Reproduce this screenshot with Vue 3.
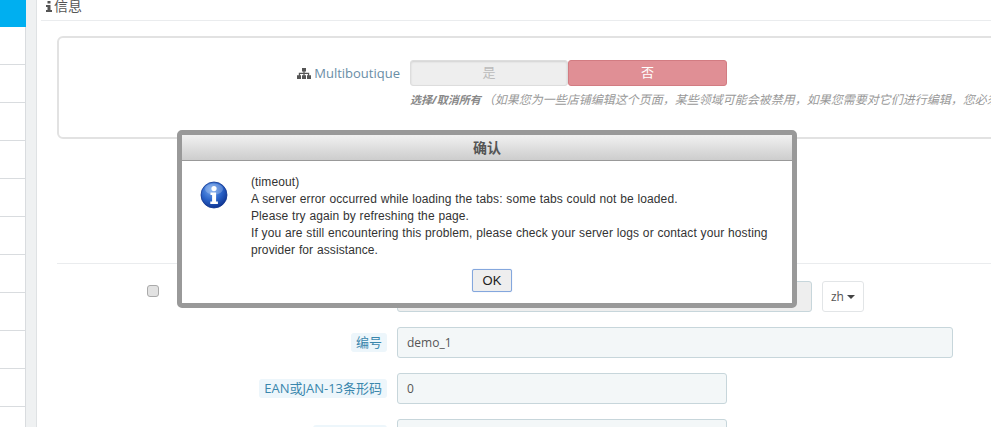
<script setup>
const sideRows = [38, 38, 38, 38, 38, 38, 38, 38, 38, 38]
const messages = [
  '(timeout)',
  'A server error occurred while loading the tabs: some tabs could not be loaded.',
  'Please try again by refreshing the page.',
  'If you are still encountering this problem, please check your server logs or contact your hosting provider for assistance.'
]
</script>

<template>
  <div class="page">
    <aside class="sidebar">
      <div class="active"></div>
      <div class="side-row first"></div>
      <div v-for="(h, i) in sideRows" :key="i" class="side-row"></div>
    </aside>
    <div class="gutter"></div>
    <main class="content">
      <h3 class="heading">
        <svg class="info-small" viewBox="0 0 6 11" width="6" height="11"><path d="M1.5 0h3v2.5h-3zM0 4h4.5v5H6v2H0V9h1.5V6H0z" fill="#555"/></svg>
        <span>信息</span>
      </h3>
      <section class="card">
        <div class="shop-row">
          <label class="shop-label">
            <svg viewBox="0 0 14 11" width="14" height="11"><path d="M5 0h4v3.4H7.6v1.4h4.6v2.4H14V11H10V7.2h.9V6H7.6v1.2H9V11H5V7.2h1.4V6H3.1v1.2H4V11H0V7.2h1.8V4.8h4.6V3.4H5z" fill="#555"/></svg>
            Multiboutique
          </label>
          <div class="toggle">
            <span class="yes">是</span>
            <span class="no">否</span>
          </div>
        </div>
        <p class="hint"><b>选择/取消所有</b>（如果您为一些店铺编辑这个页面，某些领域可能会被禁用，如果您需要对它们进行编辑，您必须选择所有）</p>
      </section>
      <hr class="rule" />
      <div class="fields">
        <div class="field name-row">
          <div class="label-col"><span class="check"></span></div>
          <div class="input grey"></div>
          <button class="lang">zh <i class="caret"></i></button>
        </div>
        <div class="field">
          <div class="label-col"><span class="tag">编号</span></div>
          <div class="input wide">demo_1</div>
        </div>
        <div class="field">
          <div class="label-col"><span class="tag">EAN或JAN-13条形码</span></div>
          <div class="input short">0</div>
        </div>
        <div class="field">
          <div class="label-col"><span class="tag">UPC条形码</span></div>
          <div class="input short"></div>
        </div>
      </div>
    </main>

    <div class="dialog">
      <div class="dialog-title">确认</div>
      <div class="dialog-body">
        <svg class="dialog-icon" viewBox="0 0 28 28" width="28" height="28">
          <defs>
            <radialGradient id="ball" cx="40%" cy="30%" r="75%">
              <stop offset="0" stop-color="#6fa4ee"/>
              <stop offset="0.55" stop-color="#2a63c8"/>
              <stop offset="1" stop-color="#0c2f8c"/>
            </radialGradient>
          </defs>
          <circle cx="14" cy="14" r="13" fill="url(#ball)" stroke="#12368f" stroke-width="0.8"/>
          <ellipse cx="14" cy="8" rx="9" ry="5.5" fill="#fff" opacity="0.22"/>
          <circle cx="14" cy="7.6" r="2.6" fill="#fff"/>
          <path d="M10.5 11.6h5.6v9h1.8v2.4h-7.6v-2.4h1.8v-6.6h-1.6z" fill="#fff"/>
        </svg>
        <div class="dialog-text">
          <p v-for="m in messages" :key="m">{{ m }}</p>
        </div>
      </div>
      <div class="dialog-actions">
        <button class="ok">OK</button>
      </div>
    </div>
  </div>
</template>

<style>
html, body { margin: 0; padding: 0; background: #fff; overflow: hidden; }
</style>

<style scoped>
.page {
  position: relative;
  display: flex;
  width: 991px;
  height: 427px;
  overflow: hidden;
  background: #fff;
  font-family: "Open Sans", "Noto Sans CJK SC", sans-serif;
  font-size: 13px;
  color: #555;
}
.sidebar { width: 25px; flex: none; background: #fff; border-right: 1px solid #d9dcdf; box-sizing: content-box; }
.active { height: 27px; width: 26px; background: #00aff0; }
.side-row { height: 37px; border-bottom: 1px solid #d9dcdf; }
.side-row.first { height: 37px; }
.gutter { width: 10px; flex: none; background: #eff1f2; border-right: 1px solid #dfe2e4; }
.content { flex: 1; min-width: 0; padding-left: 4px; }
.heading {
  display: flex;
  align-items: center;
  gap: 2px;
  height: 27px;
  margin: -7px 0 0;
  padding: 0 0 0 5px;
  box-sizing: content-box;
  border-bottom: 1px solid #eaecee;
  font-size: 14px;
  font-weight: 400;
  color: #555;
  line-height: 20px;
}
.heading span { margin-top: -1px; }
.info-small { flex: none; }
.card {
  width: 960px;
  height: 99px;
  margin: 15px 0 0 16px;
  border: 2px solid #e2e2e2;
  border-radius: 6px;
  box-sizing: content-box;
}
.shop-row { display: flex; align-items: center; padding-top: 22px; }
.shop-label {
  width: 351px;
  box-sizing: border-box;
  text-align: right;
  padding-right: 10px;
  color: #6a8ea6;
  font-size: 13px;
  white-space: nowrap;
}
.shop-label svg { vertical-align: -1px; }
.toggle { display: flex; width: 317px; height: 26px; }
.toggle span { display: flex; align-items: center; justify-content: center; box-sizing: border-box; font-size: 13px; line-height: 22px; padding-bottom: 2px; border-radius: 3px; }
.yes { width: 158px; background: #eeeeee; color: #bbb; border: 1px solid #ddd; box-shadow: inset 0 1px 2px rgba(0,0,0,.12); }
.no { width: 159px; background: #e08f95; color: #fff; border: 1px solid #d27c82; }
.hint {
  margin: 6px 0 0 351px;
  white-space: nowrap;
  font-size: 12px;
  line-height: 16px;
  font-style: italic;
  color: #999;
}
.hint b { color: #888; margin-right: 2px; font-size: 11px; }
.rule { margin: 124px 0 0 16px; border: 0; border-top: 1px solid #eaecee; }
.fields { display: flex; flex-direction: column; gap: 15px; margin-top: 17px; }
.field { display: flex; align-items: center; height: 31px; }
.label-col { width: 356px; flex: none; padding-right: 10px; box-sizing: border-box; text-align: right; }
.tag {
  display: inline-block;
  padding: 0 5px;
  height: 19px;
  line-height: 19px;
  background: #edf6fb;
  border-radius: 3px;
  color: #3a87ad;
  font-size: 13px;
}
.check {
  display: block;
  width: 10px;
  height: 10px;
  margin: 0 0 12px 106px;
  background: #e2e2e2;
  border: 1px solid #aaa;
  border-radius: 3px;
}
.input {
  box-sizing: border-box;
  height: 31px;
  padding: 0 9px;
  line-height: 29px;
  background: #f3f7f8;
  border: 1px solid #c7d6db;
  border-radius: 3px;
  font-size: 12px;
  color: #555;
}
.grey { width: 415px; background: #eee; }
.wide { width: 556px; }
.short { width: 330px; }
.lang {
  margin-left: 10px;
  width: 42px;
  height: 31px;
  padding: 0;
  background: #fff;
  border: 1px solid #e2e5e7;
  border-radius: 3px;
  font: 12px "Open Sans", sans-serif;
  color: #555;
}
.caret {
  display: inline-block;
  width: 0;
  height: 0;
  vertical-align: 2px;
  border-top: 4px solid #444;
  border-left: 4px solid transparent;
  border-right: 4px solid transparent;
}
.dialog {
  position: absolute;
  left: 177px;
  top: 130px;
  width: 620px;
  height: 178px;
  box-sizing: border-box;
  display: flex;
  flex-direction: column;
  background: #fff;
  border: 5px solid #999;
  border-radius: 5px;
  font-family: "Liberation Sans", Arial, sans-serif;
  font-size: 12px;
  color: #333;
}
.dialog-title {
  height: 26px;
  box-sizing: border-box;
  line-height: 25px;
  text-align: center;
  font-family: "Noto Sans CJK SC", sans-serif;
  font-size: 14px;
  font-weight: 700;
  color: #555;
  background: linear-gradient(#f1f1f1, #cdcdcd);
  border-bottom: 1px solid #999;
}
.dialog-body { display: flex; padding: 13px 20px 0 18px; }
.dialog-icon { flex: none; margin: 7px 23px 0 0; }
.dialog-text { width: 530px; line-height: 17px; letter-spacing: 0.1px; word-spacing: 0.3px; }
.dialog-text p { margin: 0; }
.dialog-actions { display: flex; justify-content: center; padding-top: 10px; margin-left: 10px; }
.ok {
  width: 40px;
  height: 23px;
  padding: 0;
  font: 13px "Liberation Sans", Arial, sans-serif;
  color: #222;
  background: #eeeeee;
  border: 1px solid #84a7dd;
  border-radius: 2px;
  box-shadow: 0 0 1px #a9c1ea;
}
</style>
